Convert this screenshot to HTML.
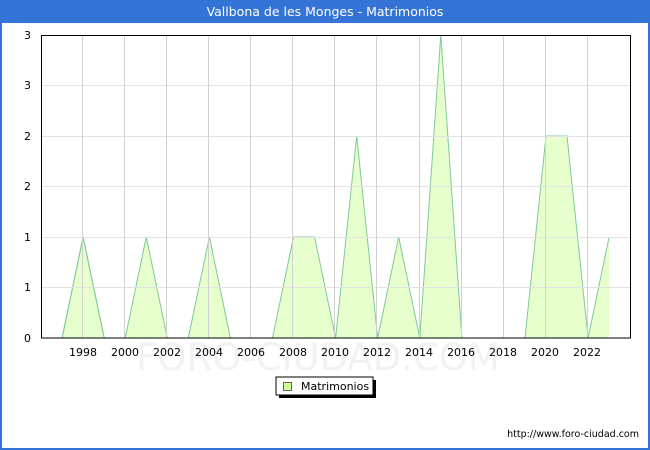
<!DOCTYPE html>
<html><head><meta charset="utf-8"><style>
html,body{margin:0;padding:0;background:#fff}
body{width:650px;height:450px;position:relative;overflow:hidden;font-family:"DejaVu Sans","Liberation Sans",sans-serif}
</style></head><body>
<svg width="650" height="450" viewBox="0 0 650 450" xmlns="http://www.w3.org/2000/svg" style="position:absolute;left:0;top:0">
<rect x="0" y="0" width="650" height="450" fill="#fff"/>
<rect x="0" y="0" width="650" height="23" fill="#3474d6"/>
<rect x="0" y="0" width="2" height="450" fill="#3474d6"/>
<rect x="648" y="0" width="2" height="450" fill="#3474d6"/>
<rect x="0" y="448" width="650" height="2" fill="#3474d6"/>
<text x="325" y="16" text-anchor="middle" font-size="12.5" fill="#fff" font-family="DejaVu Sans,sans-serif">Vallbona de les Monges - Matrimonios</text>
<text x="318" y="370" text-anchor="middle" font-size="37" fill="#f2f2f6" font-family="DejaVu Sans,sans-serif">FORO-CIUDAD.COM</text>
<polygon fill="#e6ffcc" stroke="none" points="62.1,338 83.1,237 104.2,338 125.2,338 146.3,237 167.3,338 188.3,338 209.4,237 230.4,338 251.5,338 272.5,338 293.5,237 314.6,237 335.6,338 356.7,136 377.7,338 398.7,237 419.8,338 440.8,35 461.9,338 482.9,338 503.9,338 525,338 546,136 567,136 588.1,338 609.1,237 609.1,338"/>
<polyline fill="none" stroke="#80c89a" stroke-width="1" points="62.1,338 83.1,237 104.2,338 M125.2,338"/>
<path fill="none" stroke="#80c89a" stroke-width="1" d="M62.1,338 L83.1,237 L104.2,338 M125.2,338 L146.3,237 L167.3,338 M188.3,338 L209.4,237 L230.4,338 M272.5,338 L293.5,237 L314.6,237 L335.6,338 L356.7,136 L377.7,338 L398.7,237 L419.8,338 L440.8,35 L461.9,338 M525,338 L546,136 L567,136 L588.1,338 L609.1,237"/>
<g stroke="#d0d0d0" stroke-width="1">
<line x1="41" y1="85.5" x2="630" y2="85.5" stroke="#e2e2e2"/>
<line x1="41" y1="136.5" x2="630" y2="136.5" stroke="#e2e2e2"/>
<line x1="41" y1="186.5" x2="630" y2="186.5" stroke="#e2e2e2"/>
<line x1="41" y1="237.5" x2="630" y2="237.5" stroke="#e2e2e2"/>
<line x1="41" y1="287.5" x2="630" y2="287.5" stroke="#e2e2e2"/>
<line x1="82.5" y1="35" x2="82.5" y2="338"/>
<line x1="124.5" y1="35" x2="124.5" y2="338"/>
<line x1="166.5" y1="35" x2="166.5" y2="338"/>
<line x1="208.5" y1="35" x2="208.5" y2="338"/>
<line x1="250.5" y1="35" x2="250.5" y2="338"/>
<line x1="292.5" y1="35" x2="292.5" y2="338"/>
<line x1="334.5" y1="35" x2="334.5" y2="338"/>
<line x1="376.5" y1="35" x2="376.5" y2="338"/>
<line x1="419.5" y1="35" x2="419.5" y2="338"/>
<line x1="461.5" y1="35" x2="461.5" y2="338"/>
<line x1="503.5" y1="35" x2="503.5" y2="338"/>
<line x1="545.5" y1="35" x2="545.5" y2="338"/>
<line x1="587.5" y1="35" x2="587.5" y2="338"/>
</g>
<rect x="41.5" y="35.5" width="589" height="302.5" fill="none" stroke="#000" stroke-width="1"/>
<g font-size="11" fill="#000" text-anchor="end">
<text x="31" y="39">3</text>
<text x="31" y="89">3</text>
<text x="31" y="140">2</text>
<text x="31" y="190">2</text>
<text x="31" y="241">1</text>
<text x="31" y="291">1</text>
<text x="31" y="342">0</text>
</g>
<g font-size="11" fill="#000" text-anchor="middle">
<text x="83" y="356">1998</text><text x="125" y="356">2000</text><text x="167" y="356">2002</text><text x="209" y="356">2004</text><text x="251" y="356">2006</text><text x="293" y="356">2008</text><text x="335" y="356">2010</text><text x="377" y="356">2012</text><text x="419" y="356">2014</text><text x="461" y="356">2016</text><text x="503" y="356">2018</text><text x="545" y="356">2020</text><text x="587" y="356">2022</text>
</g>
<rect x="279" y="380" width="97" height="18" fill="#000"/>
<rect x="276" y="377" width="97" height="18" fill="#fff" stroke="#000" stroke-width="1"/>
<rect x="283.5" y="382.5" width="8" height="8" fill="#ccff99" stroke="#666"/>
<text x="301" y="390" font-size="11" fill="#000">Matrimonios</text>
<text x="639" y="437" text-anchor="end" font-size="9.5" fill="#000">http://www.foro-ciudad.com</text>
</svg>
</body></html>
